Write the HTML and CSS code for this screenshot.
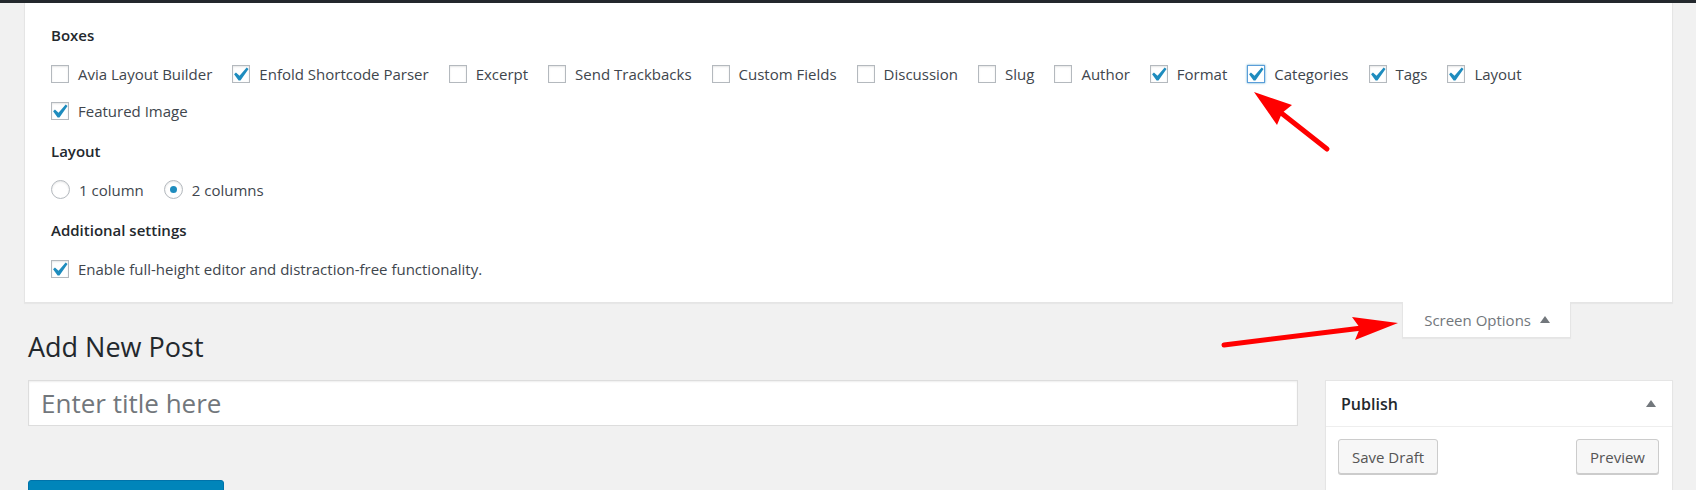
FILE: index.html
```html
<!DOCTYPE html>
<html lang="en">
<head>
    <meta charset="utf-8">
    <title>Add New Post</title>
    <link rel="stylesheet" href="styles.css">
</head>
<body>
    <div class="adminbar"></div>

    <!-- screen options panel, opened -->
    <div class="screen-panel">
        <div class="group-title">Boxes</div>
        <div class="box-list">
            <label class="opt"><span class="cb"></span>Avia Layout Builder</label>
            <label class="opt"><span class="cb"><svg viewBox="5 4 11.5 11"><path d="M14.83 4.89l1.34.94-5.81 8.38H9.02L5.78 9.67l1.34-1.25 2.57 2.4z"/></svg></span>Enfold Shortcode Parser</label>
            <label class="opt"><span class="cb"></span>Excerpt</label>
            <label class="opt"><span class="cb"></span>Send Trackbacks</label>
            <label class="opt"><span class="cb"></span>Custom Fields</label>
            <label class="opt"><span class="cb"></span>Discussion</label>
            <label class="opt"><span class="cb"></span>Slug</label>
            <label class="opt"><span class="cb"></span>Author</label>
            <label class="opt"><span class="cb"><svg viewBox="5 4 11.5 11"><path d="M14.83 4.89l1.34.94-5.81 8.38H9.02L5.78 9.67l1.34-1.25 2.57 2.4z"/></svg></span>Format</label>
            <label class="opt"><span class="cb focus"><svg viewBox="5 4 11.5 11"><path d="M14.83 4.89l1.34.94-5.81 8.38H9.02L5.78 9.67l1.34-1.25 2.57 2.4z"/></svg></span>Categories</label>
            <label class="opt"><span class="cb"><svg viewBox="5 4 11.5 11"><path d="M14.83 4.89l1.34.94-5.81 8.38H9.02L5.78 9.67l1.34-1.25 2.57 2.4z"/></svg></span>Tags</label>
            <label class="opt"><span class="cb"><svg viewBox="5 4 11.5 11"><path d="M14.83 4.89l1.34.94-5.81 8.38H9.02L5.78 9.67l1.34-1.25 2.57 2.4z"/></svg></span>Layout</label>
            <label class="opt"><span class="cb"><svg viewBox="5 4 11.5 11"><path d="M14.83 4.89l1.34.94-5.81 8.38H9.02L5.78 9.67l1.34-1.25 2.57 2.4z"/></svg></span>Featured Image</label>
        </div>

        <div class="group-title">Layout</div>
        <div class="box-list">
            <label class="opt"><span class="radio"></span>1 column</label>
            <label class="opt"><span class="radio on"></span>2 columns</label>
        </div>

        <div class="group-title">Additional settings</div>
        <div class="box-list">
            <label class="opt"><span class="cb"><svg viewBox="5 4 11.5 11"><path d="M14.83 4.89l1.34.94-5.81 8.38H9.02L5.78 9.67l1.34-1.25 2.57 2.4z"/></svg></span>Enable full-height editor and distraction-free functionality.</label>
        </div>
    </div>

    <div class="head-row">
        <h1 class="page-title">Add New Post</h1>
        <button type="button" class="screen-tab">Screen Options <svg class="tri" viewBox="0 0 10 7"><polygon points="5,0 10,7 0,7"/></svg></button>
    </div>

    <div class="columns">
        <div class="main-col">
            <input type="text" class="title-input" placeholder="Enter title here">
            <button type="button" class="builder-btn"></button>
        </div>
        <div class="side-col">
            <div class="postbox">
                <div class="postbox-head">
                    <span>Publish</span>
                    <svg class="tri" viewBox="0 0 10 7"><polygon points="5,0 10,7 0,7"/></svg>
                </div>
                <div class="postbox-actions">
                    <button type="button" class="btn">Save Draft</button>
                    <button type="button" class="btn">Preview</button>
                </div>
            </div>
        </div>
    </div>

    <!-- red annotation arrows drawn over the screenshot -->
    <svg class="marks" width="1696" height="490" viewBox="0 0 1696 490">
        <line x1="1327" y1="149" x2="1280" y2="112" stroke="#f00" stroke-width="5" stroke-linecap="round"/>
        <polygon points="1254,92 1292,105 1282,113 1277,125" fill="#f00"/>
        <line x1="1224" y1="345" x2="1362" y2="328" stroke="#f00" stroke-width="5" stroke-linecap="round"/>
        <polygon points="1398,323 1352,317 1360,328 1355,340" fill="#f00"/>
    </svg>
</body>
</html>
```

FILE: styles.css
```css
html, body {
    margin: 0;
    height: 490px;
    overflow: hidden;
}
body {
    position: relative;
    background-color: #f1f1f1;
    font-family: "Open Sans", "Noto Sans", sans-serif;
    font-size: 15px;
    color: #444;
}
.adminbar {
    height: 3px;
    background-color: #23282d;
}

.screen-panel {
    margin: 0 23px 0 24px;
    padding: 22px 100px 15px 26px;
    background: #fff;
    border: 1px solid #e5e5e5;
    border-top: none;
    box-shadow: 0 1px 1px rgba(0, 0, 0, .04);
}
.group-title {
    font-weight: 600;
    line-height: 20px;
    color: #23282d;
    margin: 0 0 10px;
}
.box-list + .group-title {
    margin-top: 12px;
}
.box-list {
    display: flex;
    flex-wrap: wrap;
}
.opt {
    display: flex;
    align-items: center;
    height: 37px;
    margin-right: 20px;
    white-space: nowrap;
    color: #40464d;
}
.cb, .radio {
    box-sizing: border-box;
    width: 18px;
    height: 18px;
    margin-right: 9px;
    border: 1px solid #b4b9be;
    background: #fff;
    box-shadow: inset 0 1px 2px rgba(0, 0, 0, .1);
    display: flex;
    align-items: center;
    justify-content: center;
}
.cb svg {
    width: 16px;
    height: 16px;
    fill: #1e8cbe;
    overflow: visible;
}
.cb.focus {
    border-color: #5b9dd9;
    box-shadow: 0 0 2px rgba(30, 140, 190, .8);
}
.radio {
    width: 19px;
    height: 19px;
    border-radius: 50%;
}
.radio.on::before {
    content: "";
    width: 7px;
    height: 7px;
    border-radius: 50%;
    background: #1e8cbe;
}

.head-row {
    display: flex;
    justify-content: space-between;
    align-items: flex-start;
    padding: 0 23px 0 28px;
}
.page-title {
    margin: 27px 0 0;
    font-size: 27px;
    line-height: 34px;
    font-weight: 400;
    color: #23282d;
}
.screen-tab {
    margin: -1px 102px 0 0;
    height: 36px;
    padding: 0 20px 0 21px;
    display: flex;
    align-items: center;
    gap: 9px;
    background: #fff;
    border: 1px solid #e5e5e5;
    border-top: none;
    box-shadow: 0 1px 1px rgba(0, 0, 0, .04);
    font-family: inherit;
    font-size: 15px;
    color: #72777c;
}
.tri {
    width: 10px;
    height: 7px;
    fill: #72777c;
}

.columns {
    display: flex;
    gap: 27px;
    padding: 16px 23px 0 28px;
}
.main-col {
    flex: 1;
}
.side-col {
    width: 348px;
}
.title-input {
    display: block;
    box-sizing: border-box;
    width: 100%;
    height: 46px;
    padding: 0 12px;
    border: 1px solid #ddd;
    box-shadow: inset 0 1px 2px rgba(0, 0, 0, .07);
    background: #fff;
    font-family: inherit;
    font-size: 26px;
    outline: none;
}
.title-input::placeholder {
    color: #72777c;
}
.builder-btn {
    display: block;
    margin-top: 54px;
    width: 196px;
    height: 40px;
    background: #0085ba;
    border: 1px solid #0073aa;
    border-radius: 3px;
}

.postbox {
    background: #fff;
    border: 1px solid #e5e5e5;
    box-shadow: 0 1px 1px rgba(0, 0, 0, .04);
    height: 140px;
}
.postbox-head {
    display: flex;
    align-items: center;
    justify-content: space-between;
    height: 45px;
    padding: 0 16px 0 15px;
    border-bottom: 1px solid #eee;
    font-size: 16px;
    font-weight: 600;
    color: #23282d;
}
.postbox-actions {
    display: flex;
    justify-content: space-between;
    padding: 12px 13px 0 12px;
}
.btn {
    height: 35px;
    padding: 0 13px;
    background: #f7f7f7;
    border: 1px solid #ccc;
    border-radius: 3px;
    box-shadow: 0 1px 0 #ccc;
    font-family: inherit;
    font-size: 15px;
    color: #555;
}

.marks {
    position: absolute;
    top: 0;
    left: 0;
    pointer-events: none;
}
```
